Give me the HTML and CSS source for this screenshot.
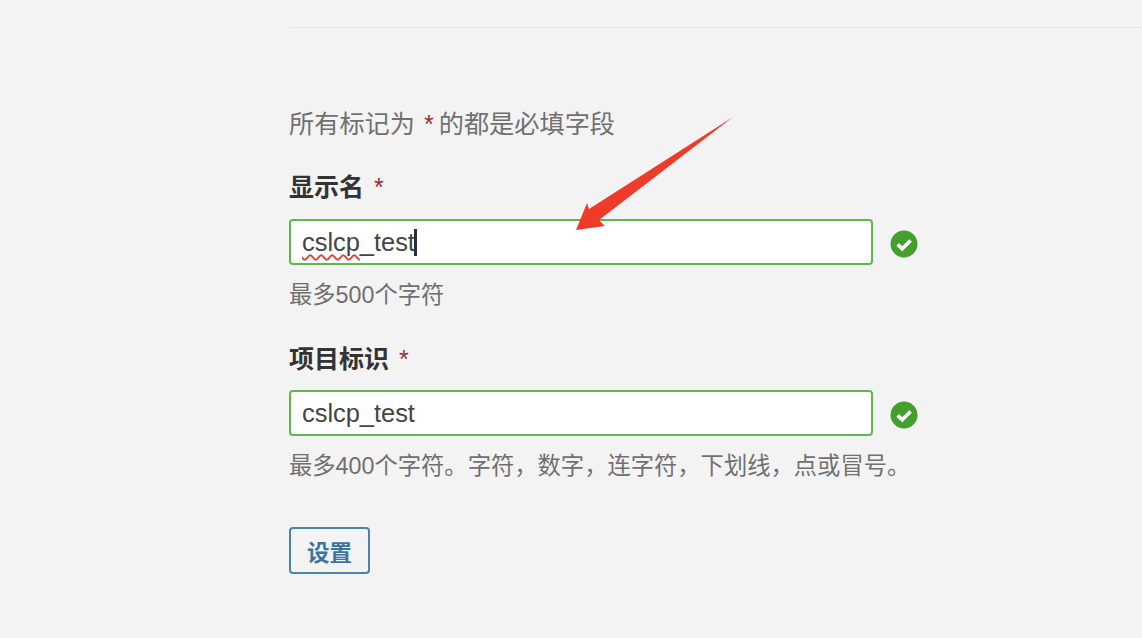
FILE: index.html
```html
<!DOCTYPE html>
<html lang="zh-CN">
<head>
<meta charset="utf-8">
<title>设置</title>
<link rel="stylesheet" href="styles.css">
</head>
<body>
<main class="page">
  <hr class="rule">
  <p class="intro">所有标记为 <span class="req">*</span> 的都是必填字段</p>
  <form class="form">
    <section class="field">
      <div class="label">显示名 <span class="req">*</span></div>
      <div class="row">
        <div class="box"><span class="misspelt">cslcp</span>_test<span class="caret"></span></div>
        <svg class="ok" viewBox="0 0 28 28"><circle cx="14" cy="14" r="13.5" fill="#43a02f"/><path d="M7.6 14.4l4.6 4.4 8.4-8.4" fill="none" stroke="#fff" stroke-width="3.6"/></svg>
      </div>
      <div class="help">最多500个字符</div>
    </section>
    <section class="field">
      <div class="label">项目标识 <span class="req">*</span></div>
      <div class="row">
        <div class="box">cslcp_test</div>
        <svg class="ok" viewBox="0 0 28 28"><circle cx="14" cy="14" r="13.5" fill="#43a02f"/><path d="M7.6 14.4l4.6 4.4 8.4-8.4" fill="none" stroke="#fff" stroke-width="3.6"/></svg>
      </div>
      <div class="help">最多400个字符。字符，数字，连字符，下划线，点或冒号。</div>
    </section>
    <button class="btn" type="button">设置</button>
  </form>
</main>
<svg class="arrow" viewBox="0 0 1142 638"><path d="M733 117L589 209 587 203 576 230 605 226 599 220Z" fill="#ee3b2a"/></svg>
</body>
</html>
```
FILE: styles.css
```css
* { box-sizing: border-box; }
html, body { margin: 0; height: 100%; }
body {
  position: relative;
  height: 638px;
  overflow: hidden;
  background: #f3f3f3;
  font-family: "Liberation Sans", "Noto Sans CJK SC", sans-serif;
  color: #333;
}
.page { padding: 27px 0 0 289px; }
.rule { margin: 0; border: 0; height: 1px; background: #e6e6e6; }
.intro {
  margin: 78px 0 0;
  height: 36px;
  line-height: 36px;
  font-size: 25.2px;
  color: #707070;
}
.req { color: #9c2a3a; }
.intro .req { margin: 0 -2px 0 2px; }
.form { margin-top: 27px; }
.field { margin-bottom: 29px; }
.label {
  height: 36px;
  line-height: 36px;
  font-size: 25px;
  font-weight: 700;
  color: #333;
}
.label .req { margin-left: 3px; font-weight: 400; }
.row {
  display: flex;
  align-items: center;
  gap: 18px;
  margin-top: 14px;
}
.field + .field .row { margin-top: 13px; }
.box {
  display: flex;
  align-items: center;
  width: 584px;
  height: 46px;
  padding: 1px 0 0 11px;
  background: #fff;
  border: 2px solid #5fb84a;
  border-radius: 4px;
  font-size: 25.4px;
  color: #444;
}
.misspelt {
  text-decoration: underline wavy #e0413a 1.5px;
  text-decoration-skip-ink: none;
  text-underline-offset: 3px;
}
.caret { width: 3px; height: 27px; margin-left: -1px; background: #26313a; }
.ok { width: 28px; height: 28px; flex: none; margin: 3px 0 0 -1px; }
.help {
  margin-top: 13px;
  height: 34px;
  line-height: 34px;
  font-size: 23.3px;
  color: #707070;
}
.btn {
  display: block;
  width: 81px;
  height: 47px;
  margin-top: 44px;
  padding: 0;
  background: #f3f3f3;
  border: 2px solid #4f80a8;
  border-radius: 4px;
  font: 700 22.5px "Liberation Sans", "Noto Sans CJK SC", sans-serif;
  color: #3b73a5;
}
.arrow { position: absolute; left: 0; top: 0; width: 1142px; height: 638px; pointer-events: none; }
```
